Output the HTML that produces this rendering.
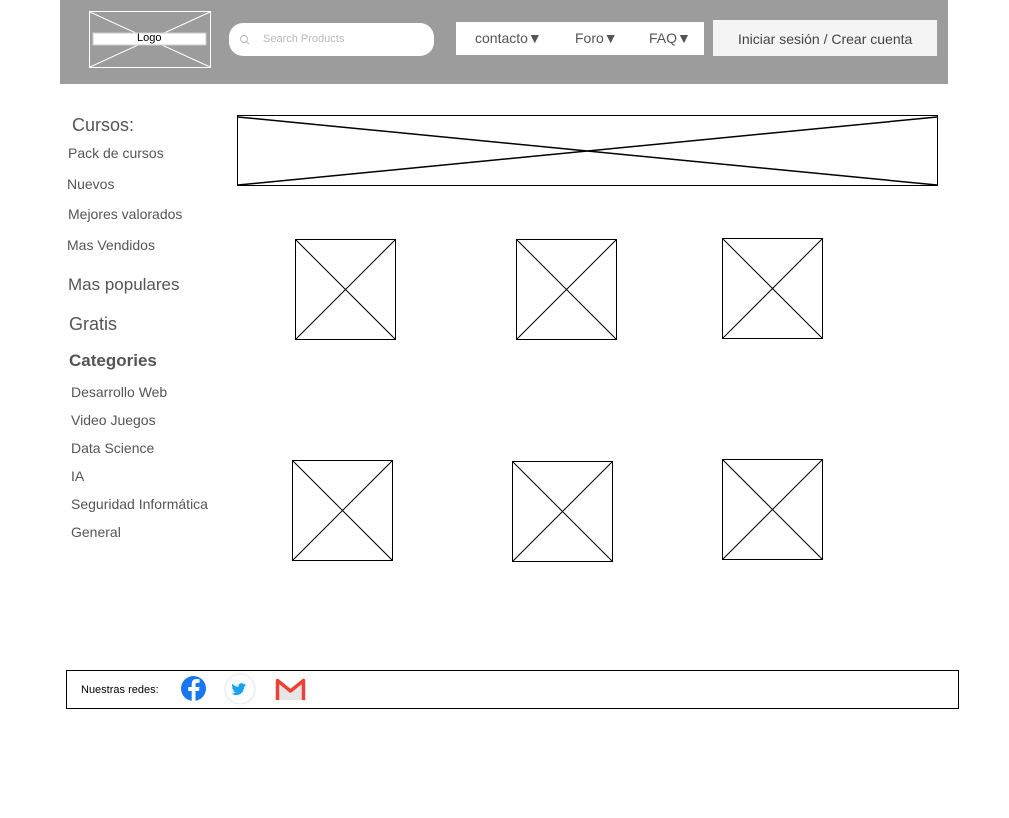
<!DOCTYPE html>
<html><head><meta charset="utf-8"><style>
body{margin:0;width:1009px;height:818px;background:#fff;font-family:"Liberation Sans",sans-serif;position:relative;overflow:hidden}
.a{position:absolute;white-space:nowrap}
.s{color:#555;font-size:14px}
</style></head><body>
<div class="a" style="left:60px;top:0;width:888px;height:84px;background:#9c9c9c"></div>
<svg class="a" style="left:0;top:0" width="1009" height="818">
<g stroke="#fff" stroke-width="1" fill="none">
<rect x="89.5" y="11.5" width="121" height="56"/>
<line x1="90" y1="12" x2="210" y2="67"/><line x1="210" y1="12" x2="90" y2="67"/>
</g>
<rect x="93" y="33" width="113" height="12" fill="#fff" stroke="#ccc"/>
<rect x="229" y="23" width="205" height="33" rx="14" fill="#fff"/>
<circle cx="244" cy="39" r="3.5" stroke="#bbb" fill="none"/><line x1="246.5" y1="41.5" x2="249" y2="44" stroke="#bbb"/>
<rect x="456" y="22" width="248" height="33" fill="#fff"/>
<rect x="713" y="20" width="224" height="36" fill="#f4f4f4"/>
<g stroke="#000" fill="none">
<rect x="237.5" y="115.5" width="700" height="70"/>
<line x1="238" y1="117" x2="937" y2="185" stroke-width="1.5"/><line x1="238" y1="185" x2="937" y2="117" stroke-width="1.5"/>
<rect x="295.5" y="239.5" width="100" height="100"/><path d="M296 240L395 339M395 240L296 339"/>
<rect x="516.5" y="239.5" width="100" height="100"/><path d="M517 240L616 339M616 240L517 339"/>
<rect x="722.5" y="238.5" width="100" height="100"/><path d="M723 239L822 338M822 239L723 338"/>
<rect x="292.5" y="460.5" width="100" height="100"/><path d="M293 461L392 560M392 461L293 560"/>
<rect x="512.5" y="461.5" width="100" height="100"/><path d="M513 462L612 561M612 462L513 561"/>
<rect x="722.5" y="459.5" width="100" height="100"/><path d="M723 460L822 559M822 460L723 559"/>
<rect x="66.5" y="670.5" width="892" height="38"/>
</g>
<circle cx="193.5" cy="688.5" r="12.5" fill="#1877f2"/>
<path d="M195.5 701V691H199L199.5 687H195.5V684.5Q195.5 682.8 197.5 682.8H199.6V679.3Q198 679 196.5 679Q191.7 679 191.7 683.8V687H188.2V691H191.7V701Z" fill="#fff"/>
<circle cx="240" cy="689" r="15" fill="#fff" stroke="#e4e4e4"/>
<path d="M246 684.5q-1 .4-1.8.5 1-.6 1.3-1.6-.9.5-1.9.7a3 3 0 0 0-5.1 2.7q-3.7-.2-6.1-3.1-1.2 2.2.9 3.9-.6 0-1.3-.4 0 2.3 2.4 2.9-.7.2-1.4.1.6 1.9 2.8 2.1-2 1.5-4.4 1.3 6.200 3.400 10.500-.800 2.100-2.600 2.100-5.700 .9-.6 1.4-1.500z" fill="#1da1f2"/>
<path d="M277 700V681L290.5 692L304 681V700" fill="#e6e6e6"/>
<path d="M277.5 700V680.5L290.5 691L303.5 680.5V700" fill="none" stroke="#ea4335" stroke-width="3.5" stroke-linejoin="round"/>
</svg>
<div class="a" style="left:137px;top:32px;font-size:11px;color:#000">Logo</div>
<div class="a" style="left:263px;top:33px;font-size:11px;color:#bbb">Search Products</div>
<div class="a" style="left:475px;top:30px;font-size:14px;color:#555">contacto▼</div>
<div class="a" style="left:575px;top:30px;font-size:14px;color:#555">Foro▼</div>
<div class="a" style="left:649px;top:30px;font-size:14px;color:#555">FAQ▼</div>
<div class="a" style="left:738px;top:31px;font-size:14px;color:#444">Iniciar sesión / Crear cuenta</div>
<div class="a" style="left:72px;top:115px;font-size:18px;color:#555">Cursos:</div>
<div class="a s" style="left:68px;top:145px">Pack de cursos</div>
<div class="a s" style="left:67px;top:176px">Nuevos</div>
<div class="a s" style="left:68px;top:206px">Mejores valorados</div>
<div class="a s" style="left:67px;top:237px">Mas Vendidos</div>
<div class="a" style="left:68px;top:275px;font-size:17px;color:#555">Mas populares</div>
<div class="a" style="left:69px;top:314px;font-size:18px;color:#555">Gratis</div>
<div class="a" style="left:69px;top:351px;font-size:17px;color:#555;font-weight:bold">Categories</div>
<div class="a s" style="left:71px;top:384px">Desarrollo Web</div>
<div class="a s" style="left:71px;top:412px">Video Juegos</div>
<div class="a s" style="left:71px;top:440px">Data Science</div>
<div class="a s" style="left:71px;top:468px">IA</div>
<div class="a s" style="left:71px;top:496px">Seguridad Informática</div>
<div class="a s" style="left:71px;top:524px">General</div>
<div class="a" style="left:81px;top:684px;font-size:11px;color:#000">Nuestras redes:</div>
</body></html>
